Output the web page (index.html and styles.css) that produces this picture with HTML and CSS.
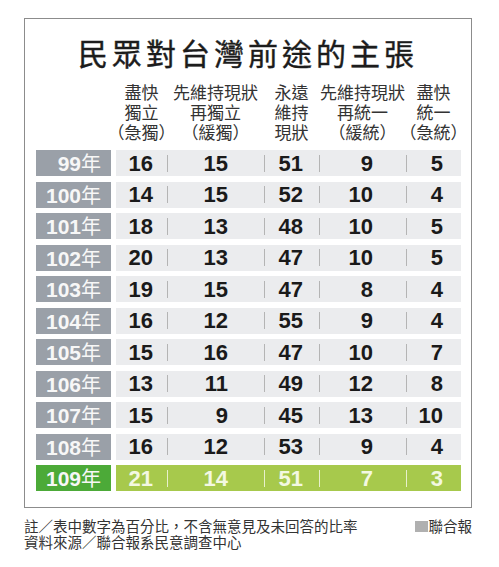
FILE: index.html
```html
<!DOCTYPE html>
<html lang="zh-Hant">
<head>
    <meta charset="UTF-8">
    <meta name="viewport" content="width=device-width, initial-scale=1.0">
    <title>民眾對台灣前途的主張</title>
    <link rel="stylesheet" href="styles.css">
</head>
<body>
    <div class="chart">
        <h1 class="title">民眾對台灣前途的主張</h1>
        <div class="head">
            <div class="spacer"></div>
            <div class="cols">
                <div><span>盡快</span><span>獨立</span><span>（急獨）</span></div>
                <div><span>先維持現狀</span><span>再獨立</span><span>（緩獨）</span></div>
                <div><span>永遠</span><span>維持</span><span>現狀</span></div>
                <div><span>先維持現狀</span><span>再統一</span><span>（緩統）</span></div>
                <div><span>盡快</span><span>統一</span><span>（急統）</span></div>
            </div>
        </div>
        <div class="rows">
            <div class="row"><div class="year">99<span>年</span></div><div class="cells"><span>16</span><span>15</span><span>51</span><span>9</span><span>5</span></div></div>
            <div class="row"><div class="year">100<span>年</span></div><div class="cells"><span>14</span><span>15</span><span>52</span><span>10</span><span>4</span></div></div>
            <div class="row"><div class="year">101<span>年</span></div><div class="cells"><span>18</span><span>13</span><span>48</span><span>10</span><span>5</span></div></div>
            <div class="row"><div class="year">102<span>年</span></div><div class="cells"><span>20</span><span>13</span><span>47</span><span>10</span><span>5</span></div></div>
            <div class="row"><div class="year">103<span>年</span></div><div class="cells"><span>19</span><span>15</span><span>47</span><span>8</span><span>4</span></div></div>
            <div class="row"><div class="year">104<span>年</span></div><div class="cells"><span>16</span><span>12</span><span>55</span><span>9</span><span>4</span></div></div>
            <div class="row"><div class="year">105<span>年</span></div><div class="cells"><span>15</span><span>16</span><span>47</span><span>10</span><span>7</span></div></div>
            <div class="row"><div class="year">106<span>年</span></div><div class="cells"><span>13</span><span>11</span><span>49</span><span>12</span><span>8</span></div></div>
            <div class="row"><div class="year">107<span>年</span></div><div class="cells"><span>15</span><span>9</span><span>45</span><span>13</span><span>10</span></div></div>
            <div class="row"><div class="year">108<span>年</span></div><div class="cells"><span>16</span><span>12</span><span>53</span><span>9</span><span>4</span></div></div>
            <div class="row now"><div class="year">109<span>年</span></div><div class="cells"><span>21</span><span>14</span><span>51</span><span>7</span><span>3</span></div></div>
        </div>
    </div>
    <div class="note">
        <p>註／表中數字為百分比，不含無意見及未回答的比率<br>資料來源／聯合報系民意調查中心</p>
        <p class="brand"><i></i>聯合報</p>
    </div>
</body>
</html>
```

FILE: styles.css
```css
body{margin: 0; background: #fff; font-family: "Noto Sans CJK TC", "Noto Sans CJK SC", sans-serif; color: #222;}
.chart{box-sizing: border-box; width: 448px; height: 490px; margin: 18px 0 0 24px; padding: 16px 11px 0; border: 1px solid #8c8c8c;}
.title{margin: 0 0 13px; font-size: 30px; line-height: 34px; font-weight: 400; letter-spacing: 4px; text-align: center; color: #1c1c1c;
 -webkit-text-stroke: 0.4px #1c1c1c;}
.head{display: flex;}
.head .spacer{width: 80px; flex: none;}
.cols{display: grid; grid-template-columns: 51px 97px 55px 87px 55px; font-size: 17px; line-height: 20px; color: #333;}
.cols div{display: flex; flex-direction: column; align-items: center;}
.cols span{white-space: nowrap;}
.rows{margin-top: 8px; display: flex; flex-direction: column; gap: 5.5px;}
.row{display: flex; height: 26px;}
.year{width: 75px; flex: none; box-sizing: border-box; padding-right: 10px; background: #9aa0a8; color: #f7f7f7;
 text-align: right; font: bold 21px/26px "Liberation Sans", Arial, sans-serif;}
.year span{font-family: "Noto Sans CJK TC", sans-serif; font-weight: 400; font-size: 20px;}
.cells{margin-left: 5px; flex: 1; display: grid; grid-template-columns: 51px 97px 55px 87px 55px; align-items: center;
 background: #ebecee; font: bold 22px/17px "Liberation Sans", Arial, sans-serif; color: #1a1a1a;}
.cells span{height: 17px; text-align: right; border-left: 1px solid #b4b4b4;}
.cells span:nth-child(1){border-left: none; padding-right: 14px;}
.cells span:nth-child(2){padding-right: 36px;}
.cells span:nth-child(3){padding-right: 16px;}
.cells span:nth-child(4){padding-right: 33px;}
.cells span:nth-child(5){padding-right: 18px;}
.now .year{background: #4caa38;}
.now .cells{background: #a7c94c; color: #f3f8e2;}
.now .cells span{border-left-color: #e8f0cc;}
.now .cells span:nth-child(1){border-left: none;}
.note{width: 448px; margin: 10px 0 0 24px; display: flex; justify-content: space-between; font-size: 14.5px; line-height: 16px; color: #333;}
.note p{margin: 0;}
.brand{display: flex; align-items: center; height: 16px; margin-right: 1px;}
.brand i{display: inline-block; width: 13px; height: 11px; background: #b0b0b0; margin-right: 1px;}
```
